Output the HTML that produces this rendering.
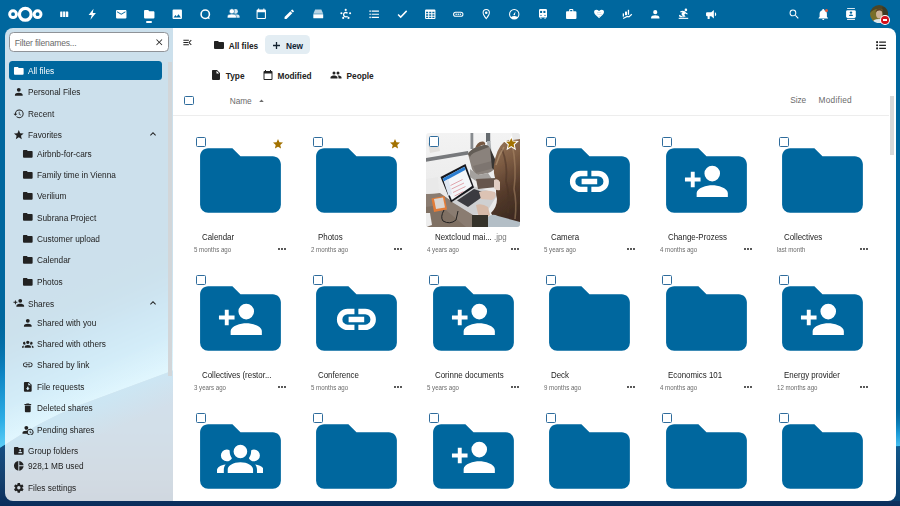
<!DOCTYPE html>
<html><head><meta charset="utf-8"><title>Files - Nextcloud</title>
<style>
*{margin:0;padding:0;box-sizing:border-box}
html,body{width:900px;height:506px;overflow:hidden}
body{position:relative;font-family:"Liberation Sans",sans-serif;background:#00679e}
.abs,.ic,.t{position:absolute}
.t{white-space:nowrap}
#bg{position:absolute;left:0;top:0;width:900px;height:506px}
#sb{position:absolute;left:5px;top:28px;width:168px;height:473.4px;border-radius:8px 0 0 8px;overflow:hidden;background:rgba(255,255,255,.8)}
#sbin{position:absolute;left:-5px;top:-28px;width:900px;height:506px}
#main{position:absolute;left:173px;top:28px;width:722.5px;height:473.4px;border-radius:0 8px 8px 0;background:#fff;overflow:hidden}
#mainin{position:absolute;left:-173px;top:-28px;width:900px;height:506px}
</style></head><body>
<svg id="bg" viewBox="0 0 900 506" preserveAspectRatio="none">
<defs>
<linearGradient id="glL" gradientUnits="userSpaceOnUse" x1="86.5" y1="409.35" x2="38" y2="299.5"><stop offset="0" stop-color="#5ccdf6"/><stop offset="0.2" stop-color="#2eaee6"/><stop offset="0.55" stop-color="#0e85c4"/><stop offset="1" stop-color="#00679e" stop-opacity="0"/></linearGradient>
<linearGradient id="glR" gradientUnits="userSpaceOnUse" x1="0" y1="448" x2="0" y2="405"><stop offset="0" stop-color="#4cc3f2"/><stop offset="0.35" stop-color="#1c9ad6"/><stop offset="1" stop-color="#00679e" stop-opacity="0"/></linearGradient>
<linearGradient id="sbgl" gradientUnits="userSpaceOnUse" x1="81.5" y1="381.35" x2="67.4" y2="349.3"><stop offset="0" stop-color="#e6f9ff" stop-opacity=".4"/><stop offset="0.4" stop-color="#e6f9ff" stop-opacity=".18"/><stop offset="1" stop-color="#fff" stop-opacity="0"/></linearGradient>
<linearGradient id="sbgl2" gradientUnits="userSpaceOnUse" x1="81.5" y1="381.35" x2="93.6" y2="408.8"><stop offset="0" stop-color="#c6ecfb" stop-opacity=".5"/><stop offset="1" stop-color="#c6ecfb" stop-opacity="0"/></linearGradient>
<linearGradient id="dk" gradientUnits="userSpaceOnUse" x1="0" y1="370" x2="0" y2="506"><stop offset="0" stop-color="#1a5e96"/><stop offset="0.44" stop-color="#16558c"/><stop offset="0.8" stop-color="#14416e"/><stop offset="1" stop-color="#0a2d5b"/></linearGradient>
<linearGradient id="dkR" gradientUnits="userSpaceOnUse" x1="0" y1="446" x2="0" y2="506"><stop offset="0" stop-color="#11578a"/><stop offset="1" stop-color="#0b3e6d"/></linearGradient>
</defs>
<rect width="900" height="506" fill="#00679e"/>
<path d="M0,448 Q40,421 80,405 L173,370.5 L173,200 L0,200Z" fill="url(#glL)"/>
<path d="M840,448 L900,446 L900,380 L840,380Z" fill="url(#glR)"/>
<path d="M0,448 Q40,421 80,405 L173,370.5 L450,330 L895,449 L900,446.5 L900,506 L0,506Z" fill="url(#dk)"/>
<path d="M880,449 L900,446.5 L900,501 L880,501Z" fill="url(#dkR)"/>
</svg>
<svg class="ic" style="left:58.45px;top:7.95px;width:12.50px;height:12.50px" viewBox="0 0 24 24"><path fill="#fff" d="M5.2,6.8H8.5V17.2H5.2A1,1 0 0,1 4.2,16.2V7.8A1,1 0 0,1 5.2,6.8M9.8,6.8H14.1V17.2H9.8V6.8M15.4,6.8H18.7A1,1 0 0,1 19.7,7.8V16.2A1,1 0 0,1 18.7,17.2H15.4V6.8Z"/></svg>
<svg class="ic" style="left:86.35px;top:7.95px;width:12.50px;height:12.50px" viewBox="0 0 24 24"><path fill="#fff" d="M14.5,1.5L5,13.5H11L8.5,22.5L19,9.5H13L14.5,1.5Z"/></svg>
<svg class="ic" style="left:114.65px;top:7.95px;width:12.50px;height:12.50px" viewBox="0 0 24 24"><path fill="#fff" d="M20,8L12,13L4,8V6L12,11L20,6M20,4H4C2.89,4 2,4.89 2,6V18A2,2 0 0,0 4,20H20A2,2 0 0,0 22,18V6C22,4.89 21.1,4 20,4Z"/></svg>
<svg class="ic" style="left:142.65px;top:7.95px;width:12.50px;height:12.50px" viewBox="0 0 24 24"><path fill="#fff" d="M10,4H4C2.89,4 2,4.89 2,6V18A2,2 0 0,0 4,20H20A2,2 0 0,0 22,18V8C22,6.89 21.1,6 20,6H12L10,4Z"/></svg>
<svg class="ic" style="left:170.85px;top:7.95px;width:12.50px;height:12.50px" viewBox="0 0 24 24"><path fill="#fff" d="M8.5,13.5L11,16.5L14.5,12L19,18H5M21,19V5C21,3.89 20.1,3 19,3H5A2,2 0 0,0 3,5V19A2,2 0 0,0 5,21H19A2,2 0 0,0 21,19Z"/></svg>
<svg class="ic" style="left:199.05px;top:7.95px;width:12.50px;height:12.50px" viewBox="0 0 24 24"><path fill="#fff" d="M12,2.5A9.5,9.5 0 0,0 2.5,12A9.5,9.5 0 0,0 12,21.5C13.8,21.5 15.5,21 16.9,20.1L20.5,21.5L19.6,17.5C20.8,16 21.5,14.1 21.5,12A9.5,9.5 0 0,0 12,2.5M12,5.5A6.5,6.5 0 0,1 18.5,12A6.5,6.5 0 0,1 12,18.5A6.5,6.5 0 0,1 5.5,12A6.5,6.5 0 0,1 12,5.5Z"/></svg>
<svg class="ic" style="left:255.35px;top:7.95px;width:12.50px;height:12.50px" viewBox="0 0 24 24"><path fill="#fff" d="M19,19H5V8H19M16,1V3H8V1H6V3H5C3.89,3 3,3.89 3,5V19A2,2 0 0,0 5,21H19A2,2 0 0,0 21,19V5C21,3.89 20.1,3 19,3H18V1"/></svg>
<svg class="ic" style="left:283.05px;top:7.95px;width:12.50px;height:12.50px" viewBox="0 0 24 24"><path fill="#fff" d="M20.71,7.04C21.1,6.65 21.1,6 20.71,5.63L18.37,3.29C18,2.9 17.35,2.9 16.96,3.29L15.12,5.12L18.87,8.87M3,17.25V21H6.75L17.81,9.93L14.06,6.18L3,17.25Z"/></svg>
<svg class="ic" style="left:311.75px;top:7.95px;width:12.50px;height:12.50px" viewBox="0 0 24 24"><path fill="#fff" d="M2.5,12H21.5V18.5A1,1 0 0,1 20.5,19.5H3.5A1,1 0 0,1 2.5,18.5Z"/></svg>
<svg class="ic" style="left:367.55px;top:7.95px;width:12.50px;height:12.50px" viewBox="0 0 24 24"><path fill="#fff" d="M7,5H21V7H7V5M7,13V11H21V13H7M4,4.5A1.5,1.5 0 0,1 5.5,6A1.5,1.5 0 0,1 4,7.5A1.5,1.5 0 0,1 2.5,6A1.5,1.5 0 0,1 4,4.5M4,10.5A1.5,1.5 0 0,1 5.5,12A1.5,1.5 0 0,1 4,13.5A1.5,1.5 0 0,1 2.5,12A1.5,1.5 0 0,1 4,10.5M7,19V17H21V19H7M4,16.5A1.5,1.5 0 0,1 5.5,18A1.5,1.5 0 0,1 4,19.5A1.5,1.5 0 0,1 2.5,18A1.5,1.5 0 0,1 4,16.5Z"/></svg>
<svg class="ic" style="left:396.25px;top:7.95px;width:12.50px;height:12.50px" viewBox="0 0 24 24"><path fill="#fff" d="M21.5,6.5L9,19.5L3,13.5L5,11.5L9,15.5L19.5,4.5Z"/></svg>
<svg class="ic" style="left:423.95px;top:7.95px;width:12.50px;height:12.50px" viewBox="0 0 24 24"><path fill="#fff" d="M4,3H20A2,2 0 0,1 22,5V19A2,2 0 0,1 20,21H4A2,2 0 0,1 2,19V5A2,2 0 0,1 4,3M4,7V10H8V7H4M10,7V10H14V7H10M20,10V7H16V10H20M4,12V15H8V12H4M4,19H8V17H4V19M10,12V15H14V12H10M10,19H14V17H10V19M20,19V17H16V19H20M20,12H16V15H20V12Z"/></svg>
<svg class="ic" style="left:452.05px;top:7.95px;width:12.50px;height:12.50px" viewBox="0 0 24 24"><path fill="#fff" d="M7,7H17A5,5 0 0,1 17,17H7A5,5 0 0,1 7,7M7,9A3,3 0 0,0 7,15H17A3,3 0 0,0 17,9H7M8,10.5A1.5,1.5 0 0,1 8,13.5A1.5,1.5 0 0,1 8,10.5M12,10.5A1.5,1.5 0 0,1 12,13.5A1.5,1.5 0 0,1 12,10.5M16,10.5A1.5,1.5 0 0,1 16,13.5A1.5,1.5 0 0,1 16,10.5Z"/></svg>
<svg class="ic" style="left:479.95px;top:7.95px;width:12.50px;height:12.50px" viewBox="0 0 24 24"><path fill="#fff" d="M12,6.5A2.5,2.5 0 0,1 14.5,9A2.5,2.5 0 0,1 12,11.5A2.5,2.5 0 0,1 9.5,9A2.5,2.5 0 0,1 12,6.5M12,2A7,7 0 0,1 19,9C19,14.25 12,22 12,22C12,22 5,14.25 5,9A7,7 0 0,1 12,2M12,4A5,5 0 0,0 7,9C7,10 7,12 12,18.71C17,12 17,10 17,9A5,5 0 0,0 12,4Z"/></svg>
<svg class="ic" style="left:508.45px;top:7.95px;width:12.50px;height:12.50px" viewBox="0 0 24 24"><path fill="#fff" d="M12,2A10,10 0 0,0 2,12A10,10 0 0,0 12,22A10,10 0 0,0 22,12A10,10 0 0,0 12,2M12,4A8,8 0 0,1 20,12C20,14 19.3,15.8 18,17.2C16.6,16.2 14.4,15.5 12,15.5C9.6,15.5 7.4,16.2 6,17.2C4.7,15.8 4,14 4,12A8,8 0 0,1 12,4M14.5,6.5L11,11.3A1.5,1.5 0 0,0 12,14A1.5,1.5 0 0,0 13.4,12L14.5,6.5Z"/></svg>
<svg class="ic" style="left:564.75px;top:7.95px;width:12.50px;height:12.50px" viewBox="0 0 24 24"><path fill="#fff" d="M10,2H14A2,2 0 0,1 16,4V6H20A2,2 0 0,1 22,8V19A2,2 0 0,1 20,21H4C2.89,21 2,20.1 2,19V8C2,6.89 2.89,6 4,6H8V4C8,2.89 8.89,2 10,2M14,6V4H10V6H14Z"/></svg>
<svg class="ic" style="left:648.95px;top:7.95px;width:12.50px;height:12.50px" viewBox="0 0 24 24"><path fill="#fff" d="M12,4A4,4 0 0,1 16,8A4,4 0 0,1 12,12A4,4 0 0,1 8,8A4,4 0 0,1 12,4M12,14C16.42,14 20,15.79 20,18V20H4V18C4,15.79 7.58,14 12,14Z"/></svg>
<svg class="ic" style="left:705.05px;top:7.95px;width:12.50px;height:12.50px" viewBox="0 0 24 24"><path fill="#fff" d="M12,8H4A2,2 0 0,0 2,10V14A2,2 0 0,0 4,16H5V20A1,1 0 0,0 6,21H8A1,1 0 0,0 9,20V16H12L17,20V4L12,8M21.5,12C21.5,13.71 20.54,15.26 19,16V8C20.53,8.75 21.5,10.3 21.5,12Z"/></svg>
<svg class="ic" style="left:788.15px;top:7.95px;width:12.50px;height:12.50px" viewBox="0 0 24 24"><path fill="#fff" d="M9.5,3A6.5,6.5 0 0,1 16,9.5C16,11.11 15.41,12.59 14.44,13.73L14.71,14H15.5L20.5,19L19,20.5L14,15.5V14.71L13.73,14.44C12.59,15.41 11.11,16 9.5,16A6.5,6.5 0 0,1 3,9.5A6.5,6.5 0 0,1 9.5,3M9.5,5C7,5 5,7 5,9.5C5,12 7,14 9.5,14C12,14 14,12 14,9.5C14,7 12,5 9.5,5Z"/></svg>
<svg class="ic" style="left:816.75px;top:7.95px;width:12.50px;height:12.50px" viewBox="0 0 24 24"><path fill="#fff" d="M21,19V20H3V19L5,17V11C5,7.9 7.03,5.17 10,4.29C10,4.19 10,4.1 10,4A2,2 0 0,1 12,2A2,2 0 0,1 14,4C14,4.1 14,4.19 14,4.29C16.97,5.17 19,7.9 19,11V17L21,19M14,21A2,2 0 0,1 12,23A2,2 0 0,1 10,21"/></svg>
<div class="abs" style="left:146.2px;top:20.9px;width:6px;height:2.4px;border-radius:1.2px;background:#fff"></div>
<svg class="ic" style="left:312.2px;top:8px;width:12.5px;height:12.5px" viewBox="0 0 24 24"><path fill="#fff" opacity=".72" d="M6,3H18L21.5,11H2.5Z"/></svg>
<svg class="ic" style="left:0px;top:0px;width:50px;height:28px" viewBox="0 0 50 28">
<circle cx="25.3" cy="14.3" r="5.9" fill="none" stroke="#fff" stroke-width="3.3"/>
<circle cx="13.05" cy="14.2" r="3.4" fill="none" stroke="#fff" stroke-width="2.95"/>
<circle cx="37.6" cy="14.2" r="3.4" fill="none" stroke="#fff" stroke-width="2.95"/>
</svg>
<div class="abs" style="left:824.6px;top:8.9px;width:3.4px;height:3.4px;border-radius:50%;background:#e85a3c"></div>
<svg class="ic" style="left:869.9px;top:4.8px;width:18.2px;height:18.2px" viewBox="0 0 19 19">
<defs><clipPath id="av"><circle cx="9.5" cy="9.5" r="9.5"/></clipPath><filter id="avb"><feGaussianBlur stdDeviation="0.5"/></filter></defs>
<g clip-path="url(#av)"><g filter="url(#avb)"><rect width="19" height="19" fill="#7a6e2a"/><path d="M0,0H19V9 Q15,4 10,4 Q4,4 0,8Z" fill="#4c4528"/><rect x="13" y="2" width="6" height="10" fill="#3c3a26"/>
<ellipse cx="9.6" cy="9.5" rx="3.3" ry="4.6" fill="#cfb39a"/><path d="M5.8,8 Q6,3.6 9.8,3.8 Q13.6,4 13.3,8 Q12.5,5.6 9.7,5.8 Q7,5.8 5.8,8Z" fill="#5a4128"/>
<path d="M2,19 Q3,14.5 9.5,14.5 Q16,14.5 17,19Z" fill="#dfe6ea"/></g></g></svg>
<div class="abs" style="left:880.4px;top:15.3px;width:9.8px;height:9.8px;border-radius:50%;background:#fff"></div>
<div class="abs" style="left:881.4px;top:16.3px;width:7.8px;height:7.8px;border-radius:50%;background:#d3101a"></div>
<div class="abs" style="left:883.1px;top:19.3px;width:4.4px;height:1.8px;background:#fff"></div>
<svg class="ic" style="left:220px;top:4px;width:24px;height:20px" viewBox="220 4 24 20"><circle cx="235.6" cy="11.4" r="2.3" fill="#fff" opacity=".85"/><path d="M234,14.6 H237.5 Q239.6,14.8 239.6,16.4 V17.7 H234Z" fill="#fff" opacity=".85"/><circle cx="231.9" cy="11.3" r="2.6" fill="#fff" stroke="#00679e" stroke-width=".6"/><path d="M227.4,17.9 V16.4 Q227.6,14.1 231.9,14.1 Q236.2,14.1 236.4,16.4 V17.9Z" fill="#fff" stroke="#00679e" stroke-width=".5"/></svg>
<svg class="ic" style="left:336px;top:4px;width:20px;height:20px" viewBox="336 4 20 20"><g fill="#fff"><circle cx="345.7" cy="9.9" r="1.05"/><circle cx="341.4" cy="13.2" r="1.05"/><circle cx="350.1" cy="13.2" r="1.05"/><circle cx="343.2" cy="17.9" r="1.05"/><circle cx="348.5" cy="17.9" r="1.05"/></g><path d="M347.5,13.3 A2.2,2.2 0 1,0 347.5,16.1" fill="none" stroke="#fff" stroke-width="1.3"/></svg>
<svg class="ic" style="left:533px;top:4px;width:20px;height:20px" viewBox="533 4 20 20"><path d="M540.2,9.1 H545.8 Q547,9.1 547,10.3 V16.4 Q547,17.6 545.8,17.6 H540.2 Q539,17.6 539,16.4 V10.3 Q539,9.1 540.2,9.1Z" fill="#fff"/><rect x="540.1" y="10.9" width="2" height="2.1" fill="#00679e"/><rect x="543.4" y="10.9" width="2" height="2.1" fill="#00679e"/><circle cx="541" cy="15.4" r=".6" fill="#00679e"/><circle cx="545" cy="15.4" r=".6" fill="#00679e"/><path d="M539.6,17.4 L540.6,18.8 H541.8 L541,17.4Z M546.4,17.4 L545.4,18.8 H544.2 L545,17.4Z" fill="#fff"/></svg>
<svg class="ic" style="left:589px;top:4px;width:20px;height:20px" viewBox="589 4 20 20"><path d="M599.05,18.2 L598.1,17.3 C595.6,15 594.1,13.6 594.1,11.9 C594.1,10.7 595.1,9.8 596.3,9.8 C597.1,9.8 598.1,10.3 599.05,11 C600,10.3 601,9.8 601.8,9.8 C603,9.8 604,10.7 604,11.9 C604,13.6 602.5,15 600,17.3Z" fill="#fff"/><path d="M597.5,12 L598.5,13 M599.5,12 L600.5,13 M598.5,14 L599.5,15 M600.5,14 L601.5,15 M597.5,14 L596.8,14.7 M599.8,16 L599,16.8" stroke="#7fb3d3" stroke-width=".7"/></svg>
<svg class="ic" style="left:617px;top:4px;width:20px;height:20px" viewBox="617 4 20 20"><g fill="#fff"><rect x="622.7" y="13.4" width="1.3" height="3.2"/><rect x="625" y="11.6" width="2" height="3.6"/><rect x="627.8" y="9.8" width="1.3" height="5"/></g><path d="M623.2,18.5 L627.2,16.4 L628.9,16.9 L631.8,14.2" fill="none" stroke="#fff" stroke-width="1.2"/></svg>
<svg class="ic" style="left:673px;top:4px;width:20px;height:20px" viewBox="673 4 20 20"><g fill="#fff"><circle cx="685.9" cy="9.9" r="1.3"/><path d="M680.2,11.3 Q682.5,10.2 684.8,11.2 L686,12.5 L687.8,13.8 L687.2,14.4 L685.3,13.4 L684.3,14.8 L685.6,16.8 H683 L682.2,15.2 Q680.5,13.4 682.8,12.4 Q681.5,12.2 680.6,12.5Z"/><path d="M679,14.8 Q681,15.2 682.6,16.6 L684.5,17.3 H680 Q678.8,16.3 679,14.8Z"/><rect x="678.7" y="17.8" width="9.5" height="1.1"/></g></svg>
<svg class="ic" style="left:840px;top:4px;width:22px;height:20px" viewBox="840 4 22 20"><rect x="847" y="7.9" width="8" height="1.2" rx=".5" fill="#fff" opacity=".85"/><rect x="847" y="18.8" width="8" height="1.2" rx=".5" fill="#fff" opacity=".85"/><rect x="846.1" y="10.2" width="9.7" height="7.8" rx="1.4" fill="#fff"/><circle cx="851" cy="12.6" r="1.2" fill="#00679e"/><path d="M848.9,15.9 Q849.2,14.5 851,14.5 Q852.8,14.5 853.1,15.9Z" fill="#00679e"/></svg>
<div id="sb">

<svg class="abs" style="left:0;top:0;width:168px;height:473px" viewBox="0 0 168 473"><path d="M-5,420 Q35,393 75,377 L168,342.5 L168,473 L-5,473Z" fill="rgba(255,255,255,.06)"/><path d="M-5,420 Q35,393 75,377 L168,342.5 L168,400 L-5,476Z" fill="url(#sbgl2)"/><path d="M-5,420 Q35,393 75,377 L168,342.5 L168,300 L-5,376Z" fill="url(#sbgl)"/></svg>
<div id="sbin">
<div class="abs" style="left:9.2px;top:32.2px;width:159.6px;height:19.4px;border:1px solid #8f9398;border-radius:4.5px;background:#fff"></div>
<div class="t" style="left:14.80px;top:39.13px;font-size:8.6px;line-height:8.6px;color:#6a6a6a;font-weight:400;letter-spacing:-0.2px">Filter filenames...</div>
<svg class="ic" style="left:153.95px;top:36.95px;width:10.50px;height:10.50px" viewBox="0 0 24 24"><path fill="#222" d="M19,6.41L17.59,5L12,10.59L6.41,5L5,6.41L10.59,12L5,17.59L6.41,19L12,13.41L17.59,19L19,17.59L13.41,12L19,6.41Z"/></svg>
<div class="abs" style="left:9px;top:61px;width:153.3px;height:18.7px;border-radius:3.5px;background:#00679e"></div>
<svg class="ic" style="left:13.00px;top:64.80px;width:11.60px;height:11.60px" viewBox="0 0 24 24"><path fill="#fff" d="M10,4H4C2.89,4 2,4.89 2,6V18A2,2 0 0,0 4,20H20A2,2 0 0,0 22,18V8C22,6.89 21.1,6 20,6H12L10,4Z"/></svg>
<div class="t" style="left:28.30px;top:67.03px;font-size:9.2px;line-height:9.2px;color:#fff;font-weight:400;letter-spacing:0px;transform:scaleX(0.9);transform-origin:0 0">All files</div>
<svg class="ic" style="left:13.00px;top:86.20px;width:11.60px;height:11.60px" viewBox="0 0 24 24"><path fill="#222" d="M12,4A4,4 0 0,1 16,8A4,4 0 0,1 12,12A4,4 0 0,1 8,8A4,4 0 0,1 12,4M12,14C16.42,14 20,15.79 20,18V20H4V18C4,15.79 7.58,14 12,14Z"/></svg>
<div class="t" style="left:28.30px;top:88.43px;font-size:9.2px;line-height:9.2px;color:#222;font-weight:400;letter-spacing:0px;transform:scaleX(0.9);transform-origin:0 0">Personal Files</div>
<svg class="ic" style="left:13.00px;top:107.50px;width:11.60px;height:11.60px" viewBox="0 0 24 24"><path fill="#222" d="M13.5,8H12V13L16.28,15.54L17,14.33L13.5,12.25V8M13,3A9,9 0 0,0 4,12H1L4.96,16.03L9,12H6A7,7 0 0,1 13,5A7,7 0 0,1 20,12A7,7 0 0,1 13,19C11.07,19 9.32,18.21 8.06,16.94L6.64,18.36C8.27,20 10.5,21 13,21A9,9 0 0,0 22,12A9,9 0 0,0 13,3"/></svg>
<div class="t" style="left:28.30px;top:109.73px;font-size:9.2px;line-height:9.2px;color:#222;font-weight:400;letter-spacing:0px;transform:scaleX(0.9);transform-origin:0 0">Recent</div>
<svg class="ic" style="left:13.00px;top:128.80px;width:11.60px;height:11.60px" viewBox="0 0 24 24"><path fill="#222" d="M12,17.27L18.18,21L16.54,13.97L22,9.24L14.81,8.62L12,2L9.19,8.62L2,9.24L7.45,13.97L5.82,21L12,17.27Z"/></svg>
<div class="t" style="left:28.30px;top:131.03px;font-size:9.2px;line-height:9.2px;color:#222;font-weight:400;letter-spacing:0px;transform:scaleX(0.9);transform-origin:0 0">Favorites</div>
<svg class="ic" style="left:22.10px;top:147.60px;width:11.60px;height:11.60px" viewBox="0 0 24 24"><path fill="#222" d="M10,4H4C2.89,4 2,4.89 2,6V18A2,2 0 0,0 4,20H20A2,2 0 0,0 22,18V8C22,6.89 21.1,6 20,6H12L10,4Z"/></svg>
<div class="t" style="left:37.40px;top:149.83px;font-size:9.2px;line-height:9.2px;color:#222;font-weight:400;letter-spacing:0px;transform:scaleX(0.9);transform-origin:0 0">Airbnb-for-cars</div>
<svg class="ic" style="left:22.10px;top:168.80px;width:11.60px;height:11.60px" viewBox="0 0 24 24"><path fill="#222" d="M10,4H4C2.89,4 2,4.89 2,6V18A2,2 0 0,0 4,20H20A2,2 0 0,0 22,18V8C22,6.89 21.1,6 20,6H12L10,4Z"/></svg>
<div class="t" style="left:37.40px;top:171.03px;font-size:9.2px;line-height:9.2px;color:#222;font-weight:400;letter-spacing:0px;transform:scaleX(0.9);transform-origin:0 0">Family time in Vienna</div>
<svg class="ic" style="left:22.10px;top:190.00px;width:11.60px;height:11.60px" viewBox="0 0 24 24"><path fill="#222" d="M10,4H4C2.89,4 2,4.89 2,6V18A2,2 0 0,0 4,20H20A2,2 0 0,0 22,18V8C22,6.89 21.1,6 20,6H12L10,4Z"/></svg>
<div class="t" style="left:37.40px;top:192.23px;font-size:9.2px;line-height:9.2px;color:#222;font-weight:400;letter-spacing:0px;transform:scaleX(0.9);transform-origin:0 0">Verilium</div>
<svg class="ic" style="left:22.10px;top:211.40px;width:11.60px;height:11.60px" viewBox="0 0 24 24"><path fill="#222" d="M10,4H4C2.89,4 2,4.89 2,6V18A2,2 0 0,0 4,20H20A2,2 0 0,0 22,18V8C22,6.89 21.1,6 20,6H12L10,4Z"/></svg>
<div class="t" style="left:37.40px;top:213.63px;font-size:9.2px;line-height:9.2px;color:#222;font-weight:400;letter-spacing:0px;transform:scaleX(0.9);transform-origin:0 0">Subrana Project</div>
<svg class="ic" style="left:22.10px;top:232.80px;width:11.60px;height:11.60px" viewBox="0 0 24 24"><path fill="#222" d="M10,4H4C2.89,4 2,4.89 2,6V18A2,2 0 0,0 4,20H20A2,2 0 0,0 22,18V8C22,6.89 21.1,6 20,6H12L10,4Z"/></svg>
<div class="t" style="left:37.40px;top:235.03px;font-size:9.2px;line-height:9.2px;color:#222;font-weight:400;letter-spacing:0px;transform:scaleX(0.9);transform-origin:0 0">Customer upload</div>
<svg class="ic" style="left:22.10px;top:254.20px;width:11.60px;height:11.60px" viewBox="0 0 24 24"><path fill="#222" d="M10,4H4C2.89,4 2,4.89 2,6V18A2,2 0 0,0 4,20H20A2,2 0 0,0 22,18V8C22,6.89 21.1,6 20,6H12L10,4Z"/></svg>
<div class="t" style="left:37.40px;top:256.43px;font-size:9.2px;line-height:9.2px;color:#222;font-weight:400;letter-spacing:0px;transform:scaleX(0.9);transform-origin:0 0">Calendar</div>
<svg class="ic" style="left:22.10px;top:275.60px;width:11.60px;height:11.60px" viewBox="0 0 24 24"><path fill="#222" d="M10,4H4C2.89,4 2,4.89 2,6V18A2,2 0 0,0 4,20H20A2,2 0 0,0 22,18V8C22,6.89 21.1,6 20,6H12L10,4Z"/></svg>
<div class="t" style="left:37.40px;top:277.83px;font-size:9.2px;line-height:9.2px;color:#222;font-weight:400;letter-spacing:0px;transform:scaleX(0.9);transform-origin:0 0">Photos</div>
<svg class="ic" style="left:13.00px;top:297.30px;width:11.60px;height:11.60px" viewBox="0 0 24 24"><path fill="#222" d="M15,14C12.33,14 7,15.33 7,18V20H23V18C23,15.33 17.67,14 15,14M6,10V7H4V10H1V12H4V15H6V12H9V10M15,12A4,4 0 0,0 19,8A4,4 0 0,0 15,4A4,4 0 0,0 11,8A4,4 0 0,0 15,12Z"/></svg>
<div class="t" style="left:28.30px;top:299.53px;font-size:9.2px;line-height:9.2px;color:#222;font-weight:400;letter-spacing:0px;transform:scaleX(0.9);transform-origin:0 0">Shares</div>
<svg class="ic" style="left:22.10px;top:316.50px;width:11.60px;height:11.60px" viewBox="0 0 24 24"><path fill="#222" d="M12,4A4,4 0 0,1 16,8A4,4 0 0,1 12,12A4,4 0 0,1 8,8A4,4 0 0,1 12,4M12,14C16.42,14 20,15.79 20,18V20H4V18C4,15.79 7.58,14 12,14Z"/></svg>
<div class="t" style="left:37.40px;top:318.73px;font-size:9.2px;line-height:9.2px;color:#222;font-weight:400;letter-spacing:0px;transform:scaleX(0.9);transform-origin:0 0">Shared with you</div>
<svg class="ic" style="left:22.10px;top:337.80px;width:11.60px;height:11.60px" viewBox="0 0 24 24"><path fill="#222" d="M12,5.5A3.5,3.5 0 0,1 15.5,9A3.5,3.5 0 0,1 12,12.5A3.5,3.5 0 0,1 8.5,9A3.5,3.5 0 0,1 12,5.5M5,8C5.56,8 6.08,8.15 6.53,8.42C6.38,9.85 6.8,11.27 7.66,12.38C7.16,13.34 6.16,14 5,14A3,3 0 0,1 2,11A3,3 0 0,1 5,8M19,8A3,3 0 0,1 22,11A3,3 0 0,1 19,14C17.840,14 16.84,13.34 16.34,12.38C17.2,11.27 17.62,9.85 17.47,8.42C17.92,8.15 18.44,8 19,8M5.5,18.25C5.5,16.18 8.41,14.5 12,14.5C15.59,14.5 18.5,16.18 18.5,18.25V20H5.5V18.25M0,20V18.5C0,17.11 1.89,15.94 4.45,15.6C3.86,16.28 3.5,17.22 3.5,18.25V20H0M24,20H20.5V18.25C20.5,17.22 20.14,16.28 19.55,15.6C22.11,15.94 24,17.11 24,18.5V20Z"/></svg>
<div class="t" style="left:37.40px;top:340.03px;font-size:9.2px;line-height:9.2px;color:#222;font-weight:400;letter-spacing:0px;transform:scaleX(0.9);transform-origin:0 0">Shared with others</div>
<svg class="ic" style="left:22.10px;top:359.20px;width:11.60px;height:11.60px" viewBox="0 0 24 24"><path fill="#222" d="M3.9,12C3.9,10.29 5.29,8.9 7,8.9H11V7H7A5,5 0 0,0 2,12A5,5 0 0,0 7,17H11V15.1H7C5.29,15.1 3.9,13.71 3.9,12M8,13H16V11H8V13M17,7H13V8.9H17C18.71,8.9 20.1,10.29 20.1,12C20.1,13.71 18.71,15.1 17,15.1H13V17H17A5,5 0 0,0 22,12A5,5 0 0,0 17,7Z"/></svg>
<div class="t" style="left:37.40px;top:361.43px;font-size:9.2px;line-height:9.2px;color:#222;font-weight:400;letter-spacing:0px;transform:scaleX(0.9);transform-origin:0 0">Shared by link</div>
<svg class="ic" style="left:22.10px;top:380.50px;width:11.60px;height:11.60px" viewBox="0 0 24 24"><path fill="#222" d="M14,2H6A2,2 0 0,0 4,4V20A2,2 0 0,0 6,22H18A2,2 0 0,0 20,20V8L14,2M12,19L8,15H10.5V12H13.5V15H16L12,19M13,9V3.5L18.5,9H13Z"/></svg>
<div class="t" style="left:37.40px;top:382.73px;font-size:9.2px;line-height:9.2px;color:#222;font-weight:400;letter-spacing:0px;transform:scaleX(0.9);transform-origin:0 0">File requests</div>
<svg class="ic" style="left:22.10px;top:401.80px;width:11.60px;height:11.60px" viewBox="0 0 24 24"><path fill="#222" d="M19,4H15.5L14.5,3H9.5L8.5,4H5V6H19M6,19A2,2 0 0,0 8,21H16A2,2 0 0,0 18,19V7H6V19Z"/></svg>
<div class="t" style="left:37.40px;top:404.03px;font-size:9.2px;line-height:9.2px;color:#222;font-weight:400;letter-spacing:0px;transform:scaleX(0.9);transform-origin:0 0">Deleted shares</div>
<svg class="ic" style="left:22.10px;top:423.50px;width:11.60px;height:11.60px" viewBox="0 0 24 24"><path fill="#222" d="M10.63,14.1C12.23,10.58 16.38,9.03 19.9,10.63C23.42,12.23 24.97,16.38 23.37,19.9C22.24,22.4 19.75,24 17,24C14.3,24 11.830,22.44 10.67,20H1V18C1.06,16.86 1.84,15.93 3.34,15.18C4.84,14.43 6.72,14.04 9,14C9.57,14 10.11,14.05 10.63,14.1V14.1M9,4C10.12,4.03 11.06,4.42 11.81,5.17C12.56,5.92 12.93,6.86 12.93,8C12.93,9.14 12.56,10.08 11.81,10.83C11.06,11.58 10.12,11.95 9,11.95C7.88,11.95 6.94,11.58 6.19,10.83C5.44,10.08 5.07,9.14 5.07,8C5.07,6.86 5.44,5.92 6.19,5.17C6.94,4.42 7.88,4.03 9,4M17,22A5,5 0 0,0 22,17A5,5 0 0,0 17,12A5,5 0 0,0 12,17A5,5 0 0,0 17,22M16,14H17.5V16.82L19.940,18.23L19.19,19.53L16,17.69V14Z"/></svg>
<div class="t" style="left:37.40px;top:425.73px;font-size:9.2px;line-height:9.2px;color:#222;font-weight:400;letter-spacing:0px;transform:scaleX(0.9);transform-origin:0 0">Pending shares</div>
<svg class="ic" style="left:13.00px;top:444.80px;width:11.60px;height:11.60px" viewBox="0 0 24 24"><path fill="#222" d="M19,17H11V16C11,14.67 13.67,14 15,14C16.33,14 19,14.67 19,16M15,9A2,2 0 0,1 17,11A2,2 0 0,1 15,13A2,2 0 0,1 13,11C13,9.89 13.9,9 15,9M20,6H12L10,4H4C2.89,4 2,4.89 2,6V18A2,2 0 0,0 4,20H20A2,2 0 0,0 22,18V8C22,6.89 21.1,6 20,6Z"/></svg>
<div class="t" style="left:28.30px;top:447.03px;font-size:9.2px;line-height:9.2px;color:#222;font-weight:400;letter-spacing:0px;transform:scaleX(0.9);transform-origin:0 0">Group folders</div>
<svg class="ic" style="left:13.00px;top:460.20px;width:11.60px;height:11.60px" viewBox="0 0 24 24"><path fill="#222" d="M11,2V22C5.9,21.5 2,17.2 2,12C2,6.8 5.9,2.5 11,2M13,2V11H22C21.5,6.2 17.8,2.5 13,2M13,13V22C17.7,21.5 21.5,17.8 22,13H13Z"/></svg>
<div class="t" style="left:28.30px;top:462.43px;font-size:9.2px;line-height:9.2px;color:#222;font-weight:400;letter-spacing:0px;transform:scaleX(0.9);transform-origin:0 0">928,1 MB used</div>
<svg class="ic" style="left:13.00px;top:481.50px;width:11.60px;height:11.60px" viewBox="0 0 24 24"><path fill="#222" d="M12,15.5A3.5,3.5 0 0,1 8.5,12A3.5,3.5 0 0,1 12,8.5A3.5,3.5 0 0,1 15.5,12A3.5,3.5 0 0,1 12,15.5M19.43,12.97C19.47,12.65 19.5,12.33 19.5,12C19.5,11.67 19.47,11.34 19.43,11L21.54,9.37C21.73,9.22 21.78,8.95 21.66,8.73L19.66,5.27C19.54,5.05 19.27,4.96 19.05,5.05L16.56,6.05C16.04,5.66 15.5,5.32 14.87,5.07L14.5,2.42C14.46,2.18 14.25,2 14,2H10C9.75,2 9.54,2.18 9.5,2.42L9.13,5.07C8.5,5.32 7.96,5.66 7.44,6.05L4.95,5.05C4.73,4.96 4.46,5.05 4.34,5.27L2.34,8.73C2.21,8.95 2.27,9.22 2.46,9.37L4.57,11C4.53,11.34 4.5,11.67 4.5,12C4.5,12.33 4.53,12.65 4.57,12.97L2.46,14.63C2.27,14.78 2.21,15.05 2.34,15.27L4.34,18.73C4.46,18.95 4.73,19.03 4.95,18.95L7.44,17.94C7.96,18.34 8.5,18.68 9.13,18.93L9.5,21.58C9.54,21.82 9.75,22 10,22H14C14.25,22 14.46,21.82 14.5,21.58L14.87,18.93C15.5,18.67 16.04,18.34 16.56,17.94L19.05,18.95C19.27,19.03 19.54,18.95 19.66,18.73L21.66,15.27C21.780,15.05 21.73,14.78 21.54,14.63L19.43,12.97Z"/></svg>
<div class="t" style="left:28.30px;top:483.73px;font-size:9.2px;line-height:9.2px;color:#222;font-weight:400;letter-spacing:0px;transform:scaleX(0.9);transform-origin:0 0">Files settings</div>
<svg class="ic" style="left:147.00px;top:128.20px;width:12.00px;height:12.00px" viewBox="0 0 24 24"><path fill="#222" d="M7.41,15.41L12,10.83L16.59,15.41L18,14L12,8L6,14L7.41,15.41Z"/></svg>
<svg class="ic" style="left:147.00px;top:296.80px;width:12.00px;height:12.00px" viewBox="0 0 24 24"><path fill="#222" d="M7.41,15.41L12,10.83L16.59,15.41L18,14L12,8L6,14L7.41,15.41Z"/></svg>
<div class="abs" style="left:167.8px;top:62px;width:4.6px;height:314px;background:#d2d6d9"></div>
</div></div>
<div id="main"><div id="mainin">
<svg class="ic" style="left:181.70px;top:37.00px;width:11.00px;height:11.00px" viewBox="0 0 24 24"><path fill="#222" d="M3,6H15V8H3V6M3,11H13V13H3V11M3,16H15V18H3V16M21,7.4L16.4,12L21,16.6L19.6,18L13.6,12L19.6,6L21,7.4Z"/></svg>
<svg class="ic" style="left:212.70px;top:38.80px;width:12.00px;height:12.00px" viewBox="0 0 24 24"><path fill="#222" d="M10,4H4C2.89,4 2,4.89 2,6V18A2,2 0 0,0 4,20H20A2,2 0 0,0 22,18V8C22,6.89 21.1,6 20,6H12L10,4Z"/></svg>
<div class="t" style="left:228.70px;top:41.88px;font-size:8.3px;line-height:8.3px;color:#222;font-weight:700;letter-spacing:0px">All files</div>
<div class="abs" style="left:264.7px;top:35.3px;width:45.3px;height:18.9px;border-radius:4.5px;background:#e3edf3"></div>
<svg class="ic" style="left:270.50px;top:39.50px;width:11.00px;height:11.00px" viewBox="0 0 24 24"><path fill="#13222f" d="M19.6,13.4H13.4V19.6H10.6V13.4H4.4V10.6H10.6V4.4H13.4V10.6H19.6Z"/></svg>
<div class="t" style="left:286.00px;top:41.98px;font-size:8.3px;line-height:8.3px;color:#112334;font-weight:700;letter-spacing:0px">New</div>
<svg class="ic" style="left:874.95px;top:38.75px;width:12.50px;height:12.50px" viewBox="0 0 24 24"><path fill="#222" d="M8,4.8H21V7.2H8V4.8M8,13.2V10.8H21V13.2H8M4,4A2,2 0 0,1 6,6A2,2 0 0,1 4,8A2,2 0 0,1 2,6A2,2 0 0,1 4,4M4,10A2,2 0 0,1 6,12A2,2 0 0,1 4,14A2,2 0 0,1 2,12A2,2 0 0,1 4,10M8,19.2V16.8H21V19.2H8M4,16A2,2 0 0,1 6,18A2,2 0 0,1 4,20A2,2 0 0,1 2,18A2,2 0 0,1 4,16Z"/></svg>
<svg class="ic" style="left:209.90px;top:69.10px;width:12.00px;height:12.00px" viewBox="0 0 24 24"><path fill="#222" d="M13,9V3.5L18.5,9M6,2C4.89,2 4,2.89 4,4V20A2,2 0 0,0 6,22H18A2,2 0 0,0 20,20V8L14,2H6Z"/></svg>
<div class="t" style="left:225.80px;top:71.88px;font-size:8.3px;line-height:8.3px;color:#222;font-weight:700;letter-spacing:0px">Type</div>
<svg class="ic" style="left:261.70px;top:69.10px;width:12.00px;height:12.00px" viewBox="0 0 24 24"><path fill="#222" d="M19,4H18V2H16V4H8V2H6V4H5A2,2 0 0,0 3,6V20A2,2 0 0,0 5,22H19A2,2 0 0,0 21,20V6A2,2 0 0,0 19,4M19,20H5V9H19V20Z"/></svg>
<div class="t" style="left:277.50px;top:71.88px;font-size:8.3px;line-height:8.3px;color:#222;font-weight:700;letter-spacing:0px">Modified</div>
<svg class="ic" style="left:330.20px;top:69.10px;width:12.00px;height:12.00px" viewBox="0 0 24 24"><path fill="#222" d="M16,13C15.71,13 15.38,13 15.03,13.05C16.19,13.89 17,15 17,16.5V19H23V16.5C23,14.17 18.33,13 16,13M8,13C5.67,13 1,14.17 1,16.5V19H15V16.5C15,14.17 10.33,13 8,13M8,11A3,3 0 0,0 11,8A3,3 0 0,0 8,5A3,3 0 0,0 5,8A3,3 0 0,0 8,11M16,11A3,3 0 0,0 19,8A3,3 0 0,0 16,5A3,3 0 0,0 13,8A3,3 0 0,0 16,11Z"/></svg>
<div class="t" style="left:346.50px;top:71.88px;font-size:8.3px;line-height:8.3px;color:#222;font-weight:700;letter-spacing:0px">People</div>
<div class="abs" style="left:183.9px;top:95.5px;width:10.2px;height:9.6px;border:1.5px solid #2f6c9c;border-radius:1.5px"></div>
<div class="t" style="left:229.80px;top:96.68px;font-size:8.3px;line-height:8.3px;color:#6b6b6b;font-weight:400;letter-spacing:-0.1px">Name</div>
<svg class="ic" style="left:256.20px;top:94.70px;width:11.00px;height:11.00px" viewBox="0 0 24 24"><path fill="#6b6b6b" d="M7,15L12,10L17,15H7Z"/></svg>
<div class="t" style="left:790.30px;top:96.48px;font-size:8.3px;line-height:8.3px;color:#6b6b6b;font-weight:400;letter-spacing:-0.1px">Size</div>
<div class="t" style="left:818.60px;top:96.48px;font-size:8.3px;line-height:8.3px;color:#6b6b6b;font-weight:400;letter-spacing:0.25px">Modified</div>
<div class="abs" style="left:173px;top:115px;width:716px;height:1px;background:#ededed"></div>
<div class="abs" style="left:890px;top:96.2px;width:3.6px;height:59.3px;background:#d9d9d9"></div>
<svg class="ic" style="left:191.52px;top:131.84px;width:96.96px;height:96.96px" viewBox="0 0 24 24"><path fill="#00679e" d="M10,4H4C2.89,4 2,4.89 2,6V18A2,2 0 0,0 4,20H20A2,2 0 0,0 22,18V8C22,6.89 21.1,6 20,6H12L10,4Z"/></svg>
<div class="abs" style="left:196.10px;top:136.50px;width:10.3px;height:10.4px;border:1.5px solid #2f6c9c;border-radius:1.5px"></div>
<svg class="ic" style="left:272.10px;top:137.70px;width:12.00px;height:12.00px" viewBox="0 0 24 24"><path fill="#a37200" d="M12,17.27L18.18,21L16.54,13.97L22,9.24L14.81,8.62L12,2L9.19,8.62L2,9.24L7.45,13.97L5.82,21L12,17.27Z"/></svg>
<div class="t" style="left:201.70px;top:233.23px;font-size:8.8px;line-height:8.8px;color:#222;font-weight:400;letter-spacing:0px;transform:scaleX(0.9);transform-origin:0 0">Calendar</div>
<div class="t" style="left:194.00px;top:245.62px;font-size:7.0px;line-height:7.0px;color:#6b6b6b;font-weight:400;letter-spacing:0px;transform:scaleX(0.875);transform-origin:0 0">5 months ago</div>
<svg class="ic" style="left:275.60px;top:242.70px;width:12.00px;height:12.00px" viewBox="0 0 24 24"><path fill="#222" d="M16,12A2,2 0 0,1 18,10A2,2 0 0,1 20,12A2,2 0 0,1 18,14A2,2 0 0,1 16,12M10,12A2,2 0 0,1 12,10A2,2 0 0,1 14,12A2,2 0 0,1 12,14A2,2 0 0,1 10,12M4,12A2,2 0 0,1 6,10A2,2 0 0,1 8,12A2,2 0 0,1 6,14A2,2 0 0,1 4,12Z"/></svg>
<svg class="ic" style="left:308.02px;top:131.84px;width:96.96px;height:96.96px" viewBox="0 0 24 24"><path fill="#00679e" d="M10,4H4C2.89,4 2,4.89 2,6V18A2,2 0 0,0 4,20H20A2,2 0 0,0 22,18V8C22,6.89 21.1,6 20,6H12L10,4Z"/></svg>
<div class="abs" style="left:312.60px;top:136.50px;width:10.3px;height:10.4px;border:1.5px solid #2f6c9c;border-radius:1.5px"></div>
<svg class="ic" style="left:388.60px;top:137.70px;width:12.00px;height:12.00px" viewBox="0 0 24 24"><path fill="#a37200" d="M12,17.27L18.18,21L16.54,13.97L22,9.24L14.81,8.62L12,2L9.19,8.62L2,9.24L7.45,13.97L5.82,21L12,17.27Z"/></svg>
<div class="t" style="left:318.20px;top:233.23px;font-size:8.8px;line-height:8.8px;color:#222;font-weight:400;letter-spacing:0px;transform:scaleX(0.9);transform-origin:0 0">Photos</div>
<div class="t" style="left:310.50px;top:245.62px;font-size:7.0px;line-height:7.0px;color:#6b6b6b;font-weight:400;letter-spacing:0px;transform:scaleX(0.875);transform-origin:0 0">2 months ago</div>
<svg class="ic" style="left:392.10px;top:242.70px;width:12.00px;height:12.00px" viewBox="0 0 24 24"><path fill="#222" d="M16,12A2,2 0 0,1 18,10A2,2 0 0,1 20,12A2,2 0 0,1 18,14A2,2 0 0,1 16,12M10,12A2,2 0 0,1 12,10A2,2 0 0,1 14,12A2,2 0 0,1 12,14A2,2 0 0,1 10,12M4,12A2,2 0 0,1 6,10A2,2 0 0,1 8,12A2,2 0 0,1 6,14A2,2 0 0,1 4,12Z"/></svg>
<div class="abs" style="left:426.10px;top:133.40px;width:93.9px;height:93.5px;border-radius:3px;overflow:hidden"><svg width="94" height="94" viewBox="0 0 94 94" style="display:block">
<defs>
<linearGradient id="phbg" x1="0" y1="0" x2="0" y2="1"><stop offset="0" stop-color="#f3f3f3"/><stop offset="1" stop-color="#e6e6e6"/></linearGradient>
<linearGradient id="hairg" x1="0" y1="0" x2="0.2" y2="1"><stop offset="0" stop-color="#9c7a5e"/><stop offset="0.35" stop-color="#7d5c43"/><stop offset="0.7" stop-color="#553b2b"/><stop offset="1" stop-color="#3f2c21"/></linearGradient>
<filter id="phb" x="-5%" y="-5%" width="110%" height="110%"><feGaussianBlur stdDeviation="0.7"/></filter>
</defs>
<rect width="94" height="94" fill="url(#phbg)"/>
<g filter="url(#phb)">
<path d="M2,10 L12,8 L14,18 L4,20Z" fill="#dedcd8" opacity=".8"/>
<path d="M0,25 L42,18 L43,21.5 L0,28.8Z" fill="#77797c"/>
<rect x="44.5" y="0" width="2.8" height="16" fill="#878b8f"/>
<rect x="60" y="0" width="4.2" height="9" fill="#656a6e"/>
<path d="M61,8 L64.5,8 L67,36 L63,36Z" fill="#aeb2b5"/>
<path d="M49,16 Q51,8 57,8.5 Q60,9.5 59,12 Q55,10.5 52,16Z" fill="#765943"/>
<path d="M42,21 Q44,17 50,14.5 L58,12 Q62,11.5 64,15 L69,34 Q68,38 62,40 L52,42 Q48,41 46,36Z" fill="#8a827b"/>
<path d="M42,21 Q44,17 50,14.5 L58,12 Q62,11.5 63,14 L50,19 Q45,21 44,24Z" fill="#645d57"/>
<path d="M47,33 L66,28 L68,35 L50,40Z" fill="#7d756f"/>
<path d="M64,15 L69,26 L69.5,38 L66,35Z" fill="#383533"/>
<path d="M44,36 L52,42 L62,40 L66,46 L50,48 L44,44Z" fill="#a4a19e"/>
<path d="M0,61 L14,60 L24,67 L48,82 L62,84 L62,94 L0,94Z" fill="#8a7c71"/>
<path d="M0,74 L14,72 L40,94 L0,94Z" fill="#7a6b60" opacity=".7"/>
<path d="M0,46 L12,44 L13,60 L0,61Z" fill="#e9e9e9"/>
<path d="M0,80 L4,80 L6,92 L0,94Z" fill="#ededed"/>
<path d="M5.5,65.5 L18.5,63 L21,76.5 L8,79Z" fill="#e27b37"/>
<path d="M8,66 L17,64.5 L19,74.5 L10,76Z" fill="#dad6d2"/>
<path d="M18,77 Q14,84 17,88 Q24,92 30,87 L32,78" fill="none" stroke="#242221" stroke-width="1"/>
<path d="M24.9,68.3 L47,53 L72,61 L60,80 L47.1,82Z" fill="#cfd0d2"/>
<path d="M31,67.5 L48,56 L61,60.5 L42,74Z" fill="#3a3b3f"/>
<path d="M14.5,44 L39.5,31 L48,54.5 L25,69.5Z" fill="#18191c"/>
<path d="M16.7,45.5 L38.5,33.8 L46,53 L25.8,67Z" fill="#f4f6f9"/>
<path d="M16.7,45.5 L38.5,33.8 L39.6,36.8 L17.9,48.5Z" fill="#2c7dd0"/>
<path d="M17.9,48.5 L22.5,46 L26,61 L22.5,63Z" fill="#dfe7f2"/>
<path d="M24.5,52.5 L36.5,46.5 M25.5,56 L38,50 M27,59.5 L39.5,53.5 M28.5,63 L37.5,58.5" stroke="#d8848c" stroke-width=".7"/>
<path d="M50,46 L70,45 L71,54 L52,56Z" fill="#66574d"/>
<path d="M78,9 Q86,5 94,6 L94,90 L78,87 Q66,84 65,80 Q71,74 71,66 Q69,58 71,50 Q67,42 68,32 Q70,16 78,9Z" fill="url(#hairg)"/>
<path d="M76,16 Q82,32 80,48 Q84,62 82,80" fill="none" stroke="#4a3326" stroke-width="1.8" opacity=".55"/>
<path d="M86,10 Q91,34 88,56 Q91,70 89,86" fill="none" stroke="#b08d6c" stroke-width="1.6" opacity=".5"/>
<path d="M70,32 Q73,22 78,14" fill="none" stroke="#bb9c7c" stroke-width="1.5" opacity=".6"/>
<path d="M86,0 L94,0 L94,6 L87,7Z" fill="#e9e9e9"/>
<path d="M68,47 Q72,45 74,49 L74,57 Q70,58 68,55Z" fill="#e0cdc3"/>
<path d="M53,59 Q60,56 69,59 Q71,64 66,67 L55,66Z" fill="#dcc3b4"/>
<path d="M50,72 Q56,70 62,74 L64,82 Q60,87 53,85Z" fill="#d6b9a7"/>
<path d="M46,82 L62,82 L62,94 L46,94Z" fill="#35302c"/>
<path d="M62,84 Q66,80 72,83 L94,89 L94,94 L62,94Z" fill="#b3bec6"/>
</g>
</svg>
</div>
<div class="abs" style="left:428.70px;top:136.30px;width:10.6px;height:10.6px;border:1.5px solid #2f6c9c;border-radius:1.5px;background:#fff"></div>
<svg class="ic" style="left:501.95px;top:134.25px;width:18.50px;height:18.50px" viewBox="0 0 24 24"><path fill="#fff" d="M12,17.27L18.18,21L16.54,13.97L22,9.24L14.81,8.62L12,2L9.19,8.62L2,9.24L7.45,13.97L5.82,21L12,17.27Z"/></svg>
<svg class="ic" style="left:504.85px;top:137.45px;width:12.50px;height:12.50px" viewBox="0 0 24 24"><path fill="#a37200" d="M12,17.27L18.18,21L16.54,13.97L22,9.24L14.81,8.62L12,2L9.19,8.62L2,9.24L7.45,13.97L5.82,21L12,17.27Z"/></svg>
<div class="t" style="left:434.70px;top:233.23px;font-size:8.8px;line-height:8.8px;color:#222;font-weight:400;letter-spacing:0px;transform:scaleX(0.9);transform-origin:0 0">Nextcloud mai...<span style="color:#767676"> .jpg</span></div>
<div class="t" style="left:427.00px;top:245.62px;font-size:7.0px;line-height:7.0px;color:#6b6b6b;font-weight:400;letter-spacing:0px;transform:scaleX(0.875);transform-origin:0 0">4 years ago</div>
<svg class="ic" style="left:508.60px;top:242.70px;width:12.00px;height:12.00px" viewBox="0 0 24 24"><path fill="#222" d="M16,12A2,2 0 0,1 18,10A2,2 0 0,1 20,12A2,2 0 0,1 18,14A2,2 0 0,1 16,12M10,12A2,2 0 0,1 12,10A2,2 0 0,1 14,12A2,2 0 0,1 12,14A2,2 0 0,1 10,12M4,12A2,2 0 0,1 6,10A2,2 0 0,1 8,12A2,2 0 0,1 6,14A2,2 0 0,1 4,12Z"/></svg>
<svg class="ic" style="left:541.02px;top:131.84px;width:96.96px;height:96.96px" viewBox="0 0 24 24"><path fill="#00679e" d="M10,4H4C2.89,4 2,4.89 2,6V18A2,2 0 0,0 4,20H20A2,2 0 0,0 22,18V8C22,6.89 21.1,6 20,6H12L10,4Z"/></svg>
<svg class="ic" style="left:566.20px;top:157.60px;width:46.80px;height:46.80px" viewBox="0 0 24 24"><path fill="#fff" d="M2,12A5.5,5.5 0 0,1 7.5,6.5H11V9.3H7.5A2.7,2.7 0 0,0 7.5,14.7H11V17.5H7.5A5.5,5.5 0 0,1 2,12M8,10.6H16V13.4H8V10.6M13,6.5H16.5A5.5,5.5 0 0,1 16.5,17.5H13V14.7H16.5A2.7,2.7 0 0,0 16.5,9.3H13V6.5Z"/></svg>
<div class="abs" style="left:545.60px;top:136.50px;width:10.3px;height:10.4px;border:1.5px solid #2f6c9c;border-radius:1.5px"></div>
<div class="t" style="left:551.20px;top:233.23px;font-size:8.8px;line-height:8.8px;color:#222;font-weight:400;letter-spacing:0px;transform:scaleX(0.9);transform-origin:0 0">Camera</div>
<div class="t" style="left:543.50px;top:245.62px;font-size:7.0px;line-height:7.0px;color:#6b6b6b;font-weight:400;letter-spacing:0px;transform:scaleX(0.875);transform-origin:0 0">5 years ago</div>
<svg class="ic" style="left:625.10px;top:242.70px;width:12.00px;height:12.00px" viewBox="0 0 24 24"><path fill="#222" d="M16,12A2,2 0 0,1 18,10A2,2 0 0,1 20,12A2,2 0 0,1 18,14A2,2 0 0,1 16,12M10,12A2,2 0 0,1 12,10A2,2 0 0,1 14,12A2,2 0 0,1 12,14A2,2 0 0,1 10,12M4,12A2,2 0 0,1 6,10A2,2 0 0,1 8,12A2,2 0 0,1 6,14A2,2 0 0,1 4,12Z"/></svg>
<svg class="ic" style="left:657.52px;top:131.84px;width:96.96px;height:96.96px" viewBox="0 0 24 24"><path fill="#00679e" d="M10,4H4C2.89,4 2,4.89 2,6V18A2,2 0 0,0 4,20H20A2,2 0 0,0 22,18V8C22,6.89 21.1,6 20,6H12L10,4Z"/></svg>
<svg class="ic" style="left:682.70px;top:157.60px;width:46.80px;height:46.80px" viewBox="0 0 24 24"><path fill="#fff" d="M15,14C12.33,14 7,15.33 7,18V20H23V18C23,15.33 17.67,14 15,14M6,10V7H4V10H1V12H4V15H6V12H9V10M15,12A4,4 0 0,0 19,8A4,4 0 0,0 15,4A4,4 0 0,0 11,8A4,4 0 0,0 15,12Z"/></svg>
<div class="abs" style="left:662.10px;top:136.50px;width:10.3px;height:10.4px;border:1.5px solid #2f6c9c;border-radius:1.5px"></div>
<div class="t" style="left:667.70px;top:233.23px;font-size:8.8px;line-height:8.8px;color:#222;font-weight:400;letter-spacing:0px;transform:scaleX(0.9);transform-origin:0 0">Change-Prozess</div>
<div class="t" style="left:660.00px;top:245.62px;font-size:7.0px;line-height:7.0px;color:#6b6b6b;font-weight:400;letter-spacing:0px;transform:scaleX(0.875);transform-origin:0 0">4 months ago</div>
<svg class="ic" style="left:741.60px;top:242.70px;width:12.00px;height:12.00px" viewBox="0 0 24 24"><path fill="#222" d="M16,12A2,2 0 0,1 18,10A2,2 0 0,1 20,12A2,2 0 0,1 18,14A2,2 0 0,1 16,12M10,12A2,2 0 0,1 12,10A2,2 0 0,1 14,12A2,2 0 0,1 12,14A2,2 0 0,1 10,12M4,12A2,2 0 0,1 6,10A2,2 0 0,1 8,12A2,2 0 0,1 6,14A2,2 0 0,1 4,12Z"/></svg>
<svg class="ic" style="left:774.02px;top:131.84px;width:96.96px;height:96.96px" viewBox="0 0 24 24"><path fill="#00679e" d="M10,4H4C2.89,4 2,4.89 2,6V18A2,2 0 0,0 4,20H20A2,2 0 0,0 22,18V8C22,6.89 21.1,6 20,6H12L10,4Z"/></svg>
<div class="abs" style="left:778.60px;top:136.50px;width:10.3px;height:10.4px;border:1.5px solid #2f6c9c;border-radius:1.5px"></div>
<div class="t" style="left:784.20px;top:233.23px;font-size:8.8px;line-height:8.8px;color:#222;font-weight:400;letter-spacing:0px;transform:scaleX(0.9);transform-origin:0 0">Collectives</div>
<div class="t" style="left:776.50px;top:245.62px;font-size:7.0px;line-height:7.0px;color:#6b6b6b;font-weight:400;letter-spacing:0px;transform:scaleX(0.875);transform-origin:0 0">last month</div>
<svg class="ic" style="left:858.10px;top:242.70px;width:12.00px;height:12.00px" viewBox="0 0 24 24"><path fill="#222" d="M16,12A2,2 0 0,1 18,10A2,2 0 0,1 20,12A2,2 0 0,1 18,14A2,2 0 0,1 16,12M10,12A2,2 0 0,1 12,10A2,2 0 0,1 14,12A2,2 0 0,1 12,14A2,2 0 0,1 10,12M4,12A2,2 0 0,1 6,10A2,2 0 0,1 8,12A2,2 0 0,1 6,14A2,2 0 0,1 4,12Z"/></svg>
<svg class="ic" style="left:191.52px;top:269.84px;width:96.96px;height:96.96px" viewBox="0 0 24 24"><path fill="#00679e" d="M10,4H4C2.89,4 2,4.89 2,6V18A2,2 0 0,0 4,20H20A2,2 0 0,0 22,18V8C22,6.89 21.1,6 20,6H12L10,4Z"/></svg>
<svg class="ic" style="left:216.70px;top:295.60px;width:46.80px;height:46.80px" viewBox="0 0 24 24"><path fill="#fff" d="M15,14C12.33,14 7,15.33 7,18V20H23V18C23,15.33 17.67,14 15,14M6,10V7H4V10H1V12H4V15H6V12H9V10M15,12A4,4 0 0,0 19,8A4,4 0 0,0 15,4A4,4 0 0,0 11,8A4,4 0 0,0 15,12Z"/></svg>
<div class="abs" style="left:196.10px;top:274.50px;width:10.3px;height:10.4px;border:1.5px solid #2f6c9c;border-radius:1.5px"></div>
<div class="t" style="left:201.70px;top:371.23px;font-size:8.8px;line-height:8.8px;color:#222;font-weight:400;letter-spacing:0px;transform:scaleX(0.9);transform-origin:0 0">Collectives (restor...</div>
<div class="t" style="left:194.00px;top:383.62px;font-size:7.0px;line-height:7.0px;color:#6b6b6b;font-weight:400;letter-spacing:0px;transform:scaleX(0.875);transform-origin:0 0">3 years ago</div>
<svg class="ic" style="left:275.60px;top:380.70px;width:12.00px;height:12.00px" viewBox="0 0 24 24"><path fill="#222" d="M16,12A2,2 0 0,1 18,10A2,2 0 0,1 20,12A2,2 0 0,1 18,14A2,2 0 0,1 16,12M10,12A2,2 0 0,1 12,10A2,2 0 0,1 14,12A2,2 0 0,1 12,14A2,2 0 0,1 10,12M4,12A2,2 0 0,1 6,10A2,2 0 0,1 8,12A2,2 0 0,1 6,14A2,2 0 0,1 4,12Z"/></svg>
<svg class="ic" style="left:308.02px;top:269.84px;width:96.96px;height:96.96px" viewBox="0 0 24 24"><path fill="#00679e" d="M10,4H4C2.89,4 2,4.89 2,6V18A2,2 0 0,0 4,20H20A2,2 0 0,0 22,18V8C22,6.89 21.1,6 20,6H12L10,4Z"/></svg>
<svg class="ic" style="left:333.20px;top:295.60px;width:46.80px;height:46.80px" viewBox="0 0 24 24"><path fill="#fff" d="M2,12A5.5,5.5 0 0,1 7.5,6.5H11V9.3H7.5A2.7,2.7 0 0,0 7.5,14.7H11V17.5H7.5A5.5,5.5 0 0,1 2,12M8,10.6H16V13.4H8V10.6M13,6.5H16.5A5.5,5.5 0 0,1 16.5,17.5H13V14.7H16.5A2.7,2.7 0 0,0 16.5,9.3H13V6.5Z"/></svg>
<div class="abs" style="left:312.60px;top:274.50px;width:10.3px;height:10.4px;border:1.5px solid #2f6c9c;border-radius:1.5px"></div>
<div class="t" style="left:318.20px;top:371.23px;font-size:8.8px;line-height:8.8px;color:#222;font-weight:400;letter-spacing:0px;transform:scaleX(0.9);transform-origin:0 0">Conference</div>
<div class="t" style="left:310.50px;top:383.62px;font-size:7.0px;line-height:7.0px;color:#6b6b6b;font-weight:400;letter-spacing:0px;transform:scaleX(0.875);transform-origin:0 0">5 months ago</div>
<svg class="ic" style="left:392.10px;top:380.70px;width:12.00px;height:12.00px" viewBox="0 0 24 24"><path fill="#222" d="M16,12A2,2 0 0,1 18,10A2,2 0 0,1 20,12A2,2 0 0,1 18,14A2,2 0 0,1 16,12M10,12A2,2 0 0,1 12,10A2,2 0 0,1 14,12A2,2 0 0,1 12,14A2,2 0 0,1 10,12M4,12A2,2 0 0,1 6,10A2,2 0 0,1 8,12A2,2 0 0,1 6,14A2,2 0 0,1 4,12Z"/></svg>
<svg class="ic" style="left:424.52px;top:269.84px;width:96.96px;height:96.96px" viewBox="0 0 24 24"><path fill="#00679e" d="M10,4H4C2.89,4 2,4.89 2,6V18A2,2 0 0,0 4,20H20A2,2 0 0,0 22,18V8C22,6.89 21.1,6 20,6H12L10,4Z"/></svg>
<svg class="ic" style="left:449.70px;top:295.60px;width:46.80px;height:46.80px" viewBox="0 0 24 24"><path fill="#fff" d="M15,14C12.33,14 7,15.33 7,18V20H23V18C23,15.33 17.67,14 15,14M6,10V7H4V10H1V12H4V15H6V12H9V10M15,12A4,4 0 0,0 19,8A4,4 0 0,0 15,4A4,4 0 0,0 11,8A4,4 0 0,0 15,12Z"/></svg>
<div class="abs" style="left:429.10px;top:274.50px;width:10.3px;height:10.4px;border:1.5px solid #2f6c9c;border-radius:1.5px"></div>
<div class="t" style="left:434.70px;top:371.23px;font-size:8.8px;line-height:8.8px;color:#222;font-weight:400;letter-spacing:0px;transform:scaleX(0.9);transform-origin:0 0">Corinne documents</div>
<div class="t" style="left:427.00px;top:383.62px;font-size:7.0px;line-height:7.0px;color:#6b6b6b;font-weight:400;letter-spacing:0px;transform:scaleX(0.875);transform-origin:0 0">5 years ago</div>
<svg class="ic" style="left:508.60px;top:380.70px;width:12.00px;height:12.00px" viewBox="0 0 24 24"><path fill="#222" d="M16,12A2,2 0 0,1 18,10A2,2 0 0,1 20,12A2,2 0 0,1 18,14A2,2 0 0,1 16,12M10,12A2,2 0 0,1 12,10A2,2 0 0,1 14,12A2,2 0 0,1 12,14A2,2 0 0,1 10,12M4,12A2,2 0 0,1 6,10A2,2 0 0,1 8,12A2,2 0 0,1 6,14A2,2 0 0,1 4,12Z"/></svg>
<svg class="ic" style="left:541.02px;top:269.84px;width:96.96px;height:96.96px" viewBox="0 0 24 24"><path fill="#00679e" d="M10,4H4C2.89,4 2,4.89 2,6V18A2,2 0 0,0 4,20H20A2,2 0 0,0 22,18V8C22,6.89 21.1,6 20,6H12L10,4Z"/></svg>
<div class="abs" style="left:545.60px;top:274.50px;width:10.3px;height:10.4px;border:1.5px solid #2f6c9c;border-radius:1.5px"></div>
<div class="t" style="left:551.20px;top:371.23px;font-size:8.8px;line-height:8.8px;color:#222;font-weight:400;letter-spacing:0px;transform:scaleX(0.9);transform-origin:0 0">Deck</div>
<div class="t" style="left:543.50px;top:383.62px;font-size:7.0px;line-height:7.0px;color:#6b6b6b;font-weight:400;letter-spacing:0px;transform:scaleX(0.875);transform-origin:0 0">9 months ago</div>
<svg class="ic" style="left:625.10px;top:380.70px;width:12.00px;height:12.00px" viewBox="0 0 24 24"><path fill="#222" d="M16,12A2,2 0 0,1 18,10A2,2 0 0,1 20,12A2,2 0 0,1 18,14A2,2 0 0,1 16,12M10,12A2,2 0 0,1 12,10A2,2 0 0,1 14,12A2,2 0 0,1 12,14A2,2 0 0,1 10,12M4,12A2,2 0 0,1 6,10A2,2 0 0,1 8,12A2,2 0 0,1 6,14A2,2 0 0,1 4,12Z"/></svg>
<svg class="ic" style="left:657.52px;top:269.84px;width:96.96px;height:96.96px" viewBox="0 0 24 24"><path fill="#00679e" d="M10,4H4C2.89,4 2,4.89 2,6V18A2,2 0 0,0 4,20H20A2,2 0 0,0 22,18V8C22,6.89 21.1,6 20,6H12L10,4Z"/></svg>
<div class="abs" style="left:662.10px;top:274.50px;width:10.3px;height:10.4px;border:1.5px solid #2f6c9c;border-radius:1.5px"></div>
<div class="t" style="left:667.70px;top:371.23px;font-size:8.8px;line-height:8.8px;color:#222;font-weight:400;letter-spacing:0px;transform:scaleX(0.9);transform-origin:0 0">Economics 101</div>
<div class="t" style="left:660.00px;top:383.62px;font-size:7.0px;line-height:7.0px;color:#6b6b6b;font-weight:400;letter-spacing:0px;transform:scaleX(0.875);transform-origin:0 0">4 months ago</div>
<svg class="ic" style="left:741.60px;top:380.70px;width:12.00px;height:12.00px" viewBox="0 0 24 24"><path fill="#222" d="M16,12A2,2 0 0,1 18,10A2,2 0 0,1 20,12A2,2 0 0,1 18,14A2,2 0 0,1 16,12M10,12A2,2 0 0,1 12,10A2,2 0 0,1 14,12A2,2 0 0,1 12,14A2,2 0 0,1 10,12M4,12A2,2 0 0,1 6,10A2,2 0 0,1 8,12A2,2 0 0,1 6,14A2,2 0 0,1 4,12Z"/></svg>
<svg class="ic" style="left:774.02px;top:269.84px;width:96.96px;height:96.96px" viewBox="0 0 24 24"><path fill="#00679e" d="M10,4H4C2.89,4 2,4.89 2,6V18A2,2 0 0,0 4,20H20A2,2 0 0,0 22,18V8C22,6.89 21.1,6 20,6H12L10,4Z"/></svg>
<svg class="ic" style="left:799.20px;top:295.60px;width:46.80px;height:46.80px" viewBox="0 0 24 24"><path fill="#fff" d="M15,14C12.33,14 7,15.33 7,18V20H23V18C23,15.33 17.67,14 15,14M6,10V7H4V10H1V12H4V15H6V12H9V10M15,12A4,4 0 0,0 19,8A4,4 0 0,0 15,4A4,4 0 0,0 11,8A4,4 0 0,0 15,12Z"/></svg>
<div class="abs" style="left:778.60px;top:274.50px;width:10.3px;height:10.4px;border:1.5px solid #2f6c9c;border-radius:1.5px"></div>
<div class="t" style="left:784.20px;top:371.23px;font-size:8.8px;line-height:8.8px;color:#222;font-weight:400;letter-spacing:0px;transform:scaleX(0.9);transform-origin:0 0">Energy provider</div>
<div class="t" style="left:776.50px;top:383.62px;font-size:7.0px;line-height:7.0px;color:#6b6b6b;font-weight:400;letter-spacing:0px;transform:scaleX(0.875);transform-origin:0 0">12 months ago</div>
<svg class="ic" style="left:858.10px;top:380.70px;width:12.00px;height:12.00px" viewBox="0 0 24 24"><path fill="#222" d="M16,12A2,2 0 0,1 18,10A2,2 0 0,1 20,12A2,2 0 0,1 18,14A2,2 0 0,1 16,12M10,12A2,2 0 0,1 12,10A2,2 0 0,1 14,12A2,2 0 0,1 12,14A2,2 0 0,1 10,12M4,12A2,2 0 0,1 6,10A2,2 0 0,1 8,12A2,2 0 0,1 6,14A2,2 0 0,1 4,12Z"/></svg>
<svg class="ic" style="left:191.52px;top:407.84px;width:96.96px;height:96.96px" viewBox="0 0 24 24"><path fill="#00679e" d="M10,4H4C2.89,4 2,4.89 2,6V18A2,2 0 0,0 4,20H20A2,2 0 0,0 22,18V8C22,6.89 21.1,6 20,6H12L10,4Z"/></svg>
<svg class="ic" style="left:216.70px;top:433.60px;width:46.80px;height:46.80px" viewBox="0 0 24 24"><path fill="#fff" d="M12,5.5A3.5,3.5 0 0,1 15.5,9A3.5,3.5 0 0,1 12,12.5A3.5,3.5 0 0,1 8.5,9A3.5,3.5 0 0,1 12,5.5M5,8C5.56,8 6.08,8.15 6.53,8.42C6.38,9.85 6.8,11.27 7.66,12.38C7.16,13.34 6.16,14 5,14A3,3 0 0,1 2,11A3,3 0 0,1 5,8M19,8A3,3 0 0,1 22,11A3,3 0 0,1 19,14C17.840,14 16.84,13.34 16.34,12.38C17.2,11.27 17.62,9.85 17.47,8.42C17.92,8.15 18.44,8 19,8M5.5,18.25C5.5,16.18 8.41,14.5 12,14.5C15.59,14.5 18.5,16.18 18.5,18.25V20H5.5V18.25M0,20V18.5C0,17.11 1.89,15.94 4.45,15.6C3.86,16.28 3.5,17.22 3.5,18.25V20H0M24,20H20.5V18.25C20.5,17.22 20.14,16.28 19.55,15.6C22.11,15.94 24,17.11 24,18.5V20Z"/></svg>
<div class="abs" style="left:196.10px;top:412.50px;width:10.3px;height:10.4px;border:1.5px solid #2f6c9c;border-radius:1.5px"></div>
<svg class="ic" style="left:308.02px;top:407.84px;width:96.96px;height:96.96px" viewBox="0 0 24 24"><path fill="#00679e" d="M10,4H4C2.89,4 2,4.89 2,6V18A2,2 0 0,0 4,20H20A2,2 0 0,0 22,18V8C22,6.89 21.1,6 20,6H12L10,4Z"/></svg>
<div class="abs" style="left:312.60px;top:412.50px;width:10.3px;height:10.4px;border:1.5px solid #2f6c9c;border-radius:1.5px"></div>
<svg class="ic" style="left:424.52px;top:407.84px;width:96.96px;height:96.96px" viewBox="0 0 24 24"><path fill="#00679e" d="M10,4H4C2.89,4 2,4.89 2,6V18A2,2 0 0,0 4,20H20A2,2 0 0,0 22,18V8C22,6.89 21.1,6 20,6H12L10,4Z"/></svg>
<svg class="ic" style="left:449.70px;top:433.60px;width:46.80px;height:46.80px" viewBox="0 0 24 24"><path fill="#fff" d="M15,14C12.33,14 7,15.33 7,18V20H23V18C23,15.33 17.67,14 15,14M6,10V7H4V10H1V12H4V15H6V12H9V10M15,12A4,4 0 0,0 19,8A4,4 0 0,0 15,4A4,4 0 0,0 11,8A4,4 0 0,0 15,12Z"/></svg>
<div class="abs" style="left:429.10px;top:412.50px;width:10.3px;height:10.4px;border:1.5px solid #2f6c9c;border-radius:1.5px"></div>
<svg class="ic" style="left:541.02px;top:407.84px;width:96.96px;height:96.96px" viewBox="0 0 24 24"><path fill="#00679e" d="M10,4H4C2.89,4 2,4.89 2,6V18A2,2 0 0,0 4,20H20A2,2 0 0,0 22,18V8C22,6.89 21.1,6 20,6H12L10,4Z"/></svg>
<div class="abs" style="left:545.60px;top:412.50px;width:10.3px;height:10.4px;border:1.5px solid #2f6c9c;border-radius:1.5px"></div>
<svg class="ic" style="left:657.52px;top:407.84px;width:96.96px;height:96.96px" viewBox="0 0 24 24"><path fill="#00679e" d="M10,4H4C2.89,4 2,4.89 2,6V18A2,2 0 0,0 4,20H20A2,2 0 0,0 22,18V8C22,6.89 21.1,6 20,6H12L10,4Z"/></svg>
<div class="abs" style="left:662.10px;top:412.50px;width:10.3px;height:10.4px;border:1.5px solid #2f6c9c;border-radius:1.5px"></div>
<svg class="ic" style="left:774.02px;top:407.84px;width:96.96px;height:96.96px" viewBox="0 0 24 24"><path fill="#00679e" d="M10,4H4C2.89,4 2,4.89 2,6V18A2,2 0 0,0 4,20H20A2,2 0 0,0 22,18V8C22,6.89 21.1,6 20,6H12L10,4Z"/></svg>
<div class="abs" style="left:778.60px;top:412.50px;width:10.3px;height:10.4px;border:1.5px solid #2f6c9c;border-radius:1.5px"></div>
</div></div>
</body></html>
